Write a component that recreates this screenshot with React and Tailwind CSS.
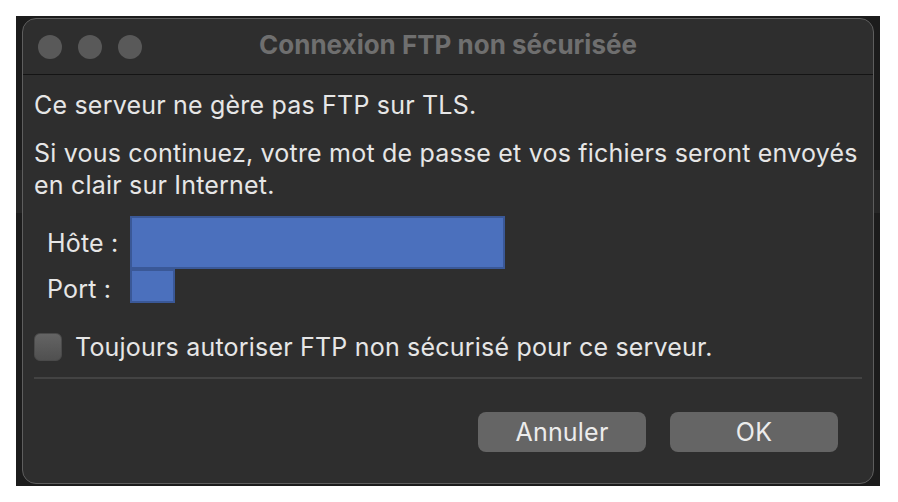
export default function App() {
  const font = { fontFamily: 'Inter, "Liberation Sans", sans-serif' };
  return (
    <div className="w-[898px] h-[502px] bg-white pt-[16px] pl-[16px]" style={font}>
      <div className="relative w-[864px] h-[470px] bg-[#1c1c1c] pl-[6px] pt-[2px]">
        <div className="absolute left-0 right-0 top-[154px] h-[43px] bg-[#262626]" />
        <div className="relative w-[852px] h-[466px] rounded-[14px] border border-[#5e5e5e] bg-[#2e2e2e] flex flex-col overflow-hidden">
          <div className="relative h-[56px] shrink-0 border-b border-[#141414] flex items-center pl-[15px]">
            <div className="flex gap-[16px]">
              <div className="w-[24px] h-[24px] rounded-full bg-[#595959]" />
              <div className="w-[24px] h-[24px] rounded-full bg-[#595959]" />
              <div className="w-[24px] h-[24px] rounded-full bg-[#595959]" />
            </div>
            <div className="absolute inset-0 flex items-center justify-center text-[26px] font-bold text-[#6f6f6f] pb-[4px]">
              Connexion FTP non sécurisée
            </div>
          </div>
          <div className="flex flex-col px-[11px] pt-[14px] text-[25px] leading-[32px] tracking-[0.2px] text-[#e6e6e6]">
            <p>Ce serveur ne gère pas FTP sur TLS.</p>
            <p className="mt-[16px]">Si vous continuez, votre mot de passe et vos fichiers seront envoyés en clair sur Internet.</p>
            <div className="mt-[15px] flex flex-col pl-[13px]">
              <div className="flex h-[53px]">
                <div className="w-[83px] pt-[11px]">Hôte :</div>
                <div className="w-[375px] h-[53px] bg-[#4b70bd] border-2 border-[#3a5897]" />
              </div>
              <div className="flex h-[34px]">
                <div className="w-[83px] pt-[4px]">Port :</div>
                <div className="w-[45px] h-[34px] bg-[#4b70bd] border-2 border-[#3a5897]" />
              </div>
            </div>
            <div className="mt-[28px] flex items-center gap-[13px]">
              <div className="w-[28px] h-[28px] rounded-[6px] bg-gradient-to-b from-[#646464] to-[#505050] border border-[#4a4a4a]" />
              <span>Toujours autoriser FTP non sécurisé pour ce serveur.</span>
            </div>
            <div className="mt-[14px] h-[2px] bg-[#434343]" />
            <div className="mt-[33px] flex justify-end gap-[24px] pr-[24px]">
              <button className="w-[168px] h-[40px] rounded-[8px] bg-[#656565] text-[#ececec] text-[25px] leading-[40px]">Annuler</button>
              <button className="w-[168px] h-[40px] rounded-[8px] bg-[#656565] text-[#ececec] text-[25px] leading-[40px]">OK</button>
            </div>
          </div>
        </div>
      </div>
    </div>
  );
}
